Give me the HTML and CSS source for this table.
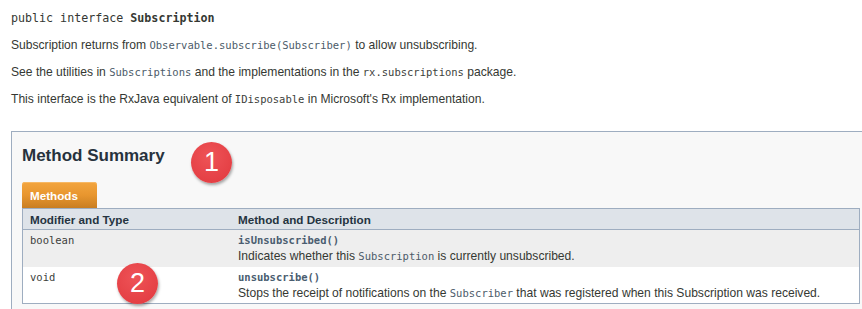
FILE: index.html
```html
<!DOCTYPE html>
<html>
<head>
<meta charset="utf-8">
<link rel="stylesheet" href="styles.css">
</head>
<body>
<div class="page">
  <div class="intro">
    <pre class="sig">public interface <b>Subscription</b></pre>
    <p class="line">Subscription returns from <code class="link">Observable.subscribe(Subscriber)</code> to allow unsubscribing.</p>
    <p class="line">See the utilities in <code class="link">Subscriptions</code> and the implementations in the <code>rx.subscriptions</code> package.</p>
    <p class="line">This interface is the RxJava equivalent of <code>IDisposable</code> in Microsoft's Rx implementation.</p>
  </div>
  <div class="summary">
    <h3 class="title">Method Summary</h3>
    <div class="tab">Methods</div>
    <table class="members">
      <tr class="head">
        <th class="c1">Modifier and Type</th>
        <th class="c2">Method and Description</th>
      </tr>
      <tr class="alt">
        <td class="c1"><code>boolean</code></td>
        <td class="c2"><div><code class="meth">isUnsubscribed()</code></div><div>Indicates whether this <code class="link">Subscription</code> is currently unsubscribed.</div></td>
      </tr>
      <tr class="row">
        <td class="c1"><code>void</code></td>
        <td class="c2"><div><code class="meth">unsubscribe()</code></div><div>Stops the receipt of notifications on the <code class="link">Subscriber</code> that was registered when this Subscription was received.</div></td>
      </tr>
    </table>
  </div>
  <div class="badge b1">1</div>
  <div class="badge b2">2</div>
</div>
</body>
</html>
```

FILE: styles.css
```css
html, body {
  margin: 0;
  padding: 0;
  overflow: hidden;
  background: #ffffff;
}
body {
  font-family: "Liberation Sans", Arial, sans-serif;
  font-size: 12.1px;
  color: #353833;
}
.page {
  position: relative;
  width: 862px;
  height: 309px;
  overflow: hidden;
}
.intro {
  padding: 5px 0 0 11px;
}
.sig, .line {
  margin: 0;
  height: 27px;
  line-height: 27px;
}
.sig {
  font-family: "DejaVu Sans Mono", monospace;
  font-size: 11.67px;
  color: #353833;
}
.sig b { font-weight: bold; }
code {
  font-family: "DejaVu Sans Mono", monospace;
  font-size: 10.5px;
  color: #3d3f3c;
}
code.link { color: #4c5b69; }
code.meth { color: #4a5d70; font-weight: bold; }

.summary {
  margin: 18px 0 0 11px;
  width: 900px;
  border: 1px solid #9eadc0;
  background: #f8f8f8;
  padding: 14px 0 20px 10px;
}
.title {
  margin: 0;
  font-size: 17px;
  line-height: 20px;
  font-weight: bold;
  color: #27323d;
}
.tab {
  display: inline-block;
  margin-top: 16px;
  padding: 6px 19px 4px 8px;
  font-size: 11.67px;
  line-height: 16px;
  font-weight: bold;
  color: #ffffff;
  background: linear-gradient(#f3a53f, #e8962f 50%, #c97e22);
  border-radius: 3px 3px 0 0;
  box-shadow: inset 0 1px 0 #f7b864;
}
.members {
  width: 838px;
  border-collapse: collapse;
  border: 1px solid #9eadc0;
}
.members th, .members td {
  text-align: left;
  vertical-align: top;
  padding: 2px 7px 3px 7px;
  line-height: 16px;
}
.members th {
  background: #dee3e9;
  color: #253441;
  font-size: 11.67px;
  font-weight: bold;
  padding: 3px 7px 1px 7px;
  border-bottom: 1px solid #9eadc0;
}
.members .c1 { width: 194px; }
.alt td { background: #eeeeee; height: 32px; padding-bottom: 3px; }
.row td { background: #ffffff; height: 32px; padding-bottom: 2px; }

.badge {
  position: absolute;
  width: 41px;
  height: 41px;
  border-radius: 50%;
  background: radial-gradient(circle at 45% 35%, #ee5357, #e43f44 75%);
  color: #ffffff;
  font-family: "Liberation Sans", Arial, sans-serif;
  font-size: 27px;
  line-height: 41px;
  text-align: center;
  box-shadow: 1px 2px 3px rgba(0, 0, 0, 0.35);
}
.b1 { left: 191px; top: 142px; }
.b2 { left: 117px; top: 263px; }
```
